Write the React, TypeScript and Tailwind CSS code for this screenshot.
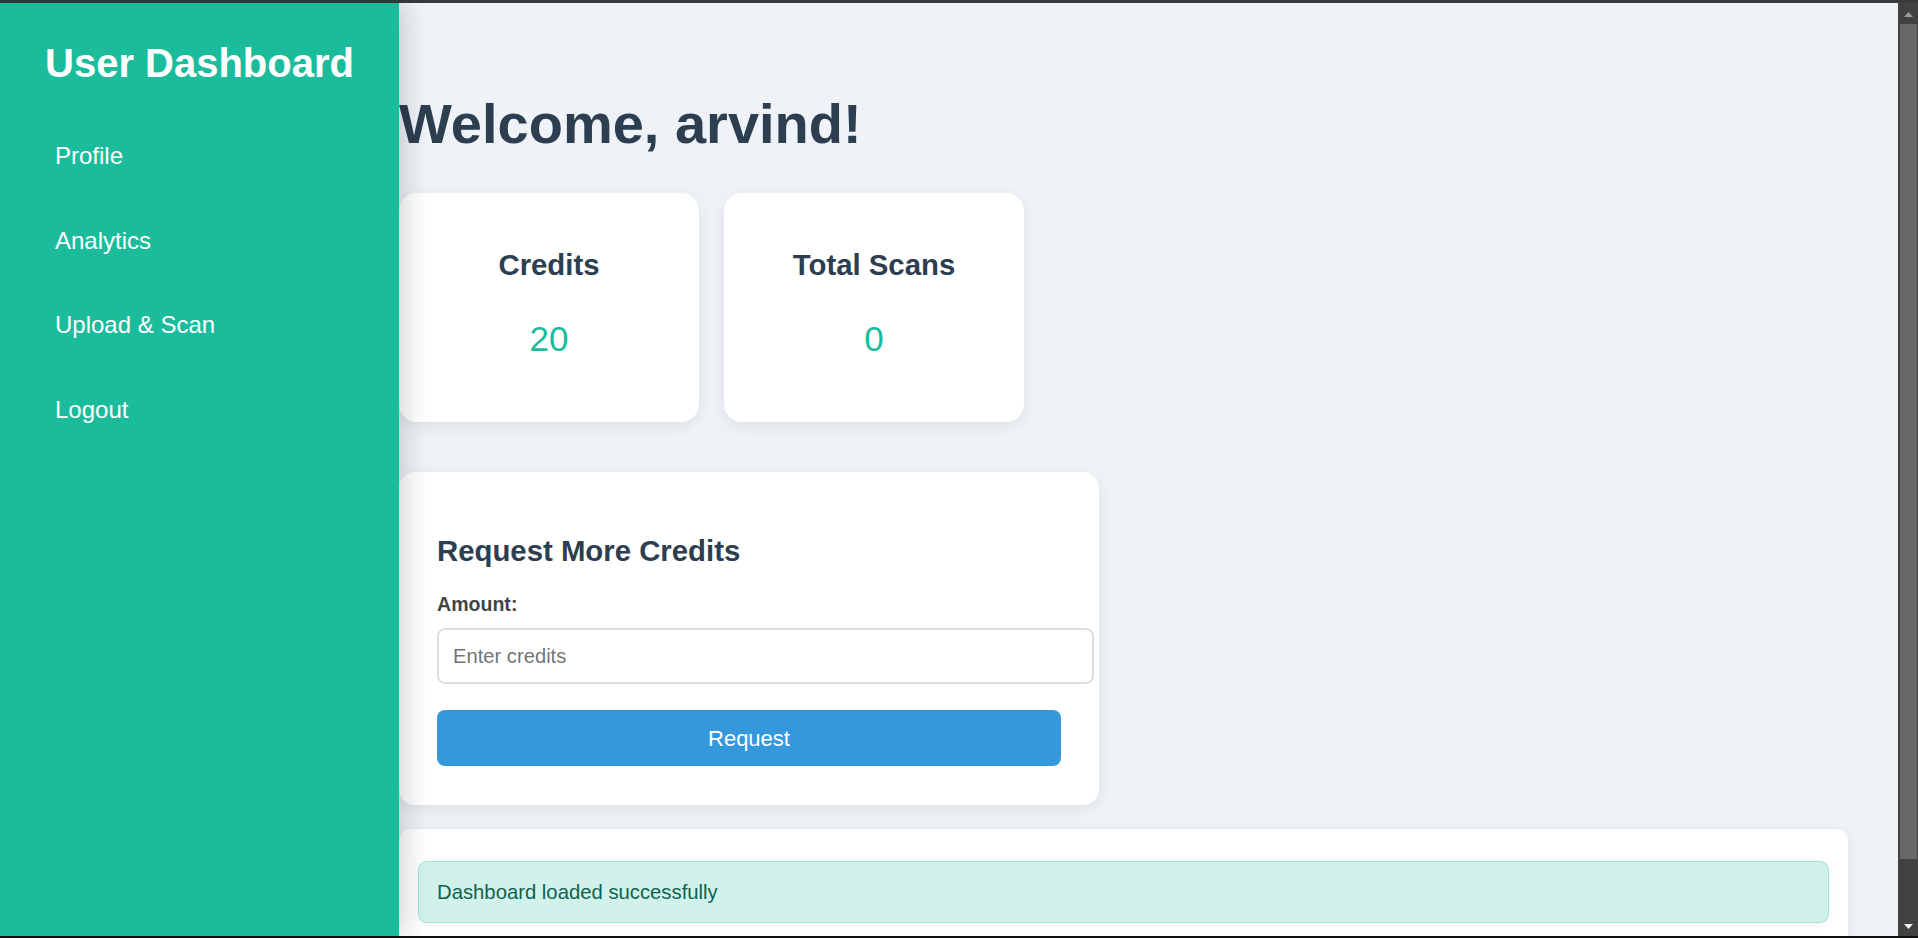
import React from "react";

const font = "font-['Liberation_Sans',Arial,Helvetica,sans-serif]";

function StatCard({ title, value }: { title: string; value: string }) {
  return (
    <div className="w-[300px] h-[229px] shrink-0 bg-white rounded-[18px] shadow-[0_4px_15px_rgba(0,0,0,0.08)] flex flex-col items-center pt-[55px]">
      <h3 className="text-[29.35px] leading-[34px] font-bold text-[#2c3e50]">{title}</h3>
      <p className="mt-[37px] text-[35px] leading-[40px] text-[#1abc9c]">{value}</p>
    </div>
  );
}

export default function App() {
  const nav = ["Profile", "Analytics", "Upload & Scan", "Logout"];
  return (
    <div className={`${font} w-[1918px] h-[938px] overflow-hidden flex flex-col bg-[#eff3f8]`}>
      <div className="h-[3px] shrink-0 bg-[#3a3a3e]" />
      <div className="h-[933px] shrink-0 flex">
        {/* Sidebar */}
        <aside className="relative z-10 w-[399px] shrink-0 bg-[#1abc9c] shadow-[2px_0_28px_rgba(0,0,0,0.22)] flex flex-col">
          <h2 className="mt-[37px] text-center text-[40px] leading-[46px] font-bold text-white">User Dashboard</h2>
          <nav className="mt-[28px] flex flex-col">
            {nav.map((n) => (
              <a key={n} className="block h-[84.5px] leading-[84.5px] pl-[55px] text-[24px] text-white cursor-pointer">
                {n}
              </a>
            ))}
          </nav>
        </aside>

        {/* Main */}
        <main className="flex-1 overflow-hidden flex flex-col">
          <h1 className="mt-[89px] shrink-0 text-[56px] leading-[64px] font-bold text-[#2c3e50]">Welcome, arvind!</h1>

          <div className="mt-[37px] shrink-0 flex gap-[25px]">
            <StatCard title="Credits" value="20" />
            <StatCard title="Total Scans" value="0" />
          </div>

          <div className="mt-[50px] w-[700px] h-[333px] shrink-0 bg-white rounded-[16px] shadow-[0_4px_15px_rgba(0,0,0,0.08)] px-[38px] pt-[62px] flex flex-col">
            <h3 className="text-[29.35px] leading-[34px] font-bold text-[#2c3e50]">Request More Credits</h3>
            <label className="mt-[25px] text-[19.57px] leading-[23px] font-bold text-[#444444]">Amount:</label>
            <input
              type="number"
              placeholder="Enter credits"
              className="mt-[12px] w-[657px] h-[56px] shrink-0 border-2 border-[#dedede] rounded-[8px] pl-[14px] text-[20.2px] text-[#333] placeholder:text-[#757575] bg-white outline-none"
            />
            <button className="mt-[26px] w-[624px] h-[56px] shrink-0 bg-[#3498db] rounded-[8px] text-white text-[22px]">
              Request
            </button>
          </div>

          <div className="mt-[24px] mr-[50px] h-[200px] shrink-0 bg-white rounded-[12px] shadow-[0_4px_15px_rgba(0,0,0,0.08)] pt-[32px] px-[19px]">
            <div className="h-[62px] flex items-center border border-[#a3e4d7] bg-[#d1f2eb] rounded-[9px] pl-[18px] text-[20.3px] text-[#0e6251] shadow-[0_2px_8px_rgba(0,0,0,0.05)]">
              Dashboard loaded successfully
            </div>
          </div>
        </main>

        {/* Scrollbar */}
        <div className="w-[20px] shrink-0 bg-[#424242] flex flex-col">
          <div className="h-[21px] shrink-0 flex justify-center pt-[9px]">
            <svg width="9" height="5" viewBox="0 0 9 5">
              <polygon points="4.5,0 9,5 0,5" fill="#9c9c9c" />
            </svg>
          </div>
          <div className="ml-[2px] w-[17px] h-[835px] shrink-0 bg-[#686868]" />
          <div className="flex-1 flex items-end justify-center pb-[7px]">
            <svg width="9" height="5" viewBox="0 0 9 5">
              <polygon points="0,0 9,0 4.5,5" fill="#f0f0f0" />
            </svg>
          </div>
        </div>
      </div>
      <div className="h-[2px] shrink-0 bg-[#111111]" />
    </div>
  );
}
